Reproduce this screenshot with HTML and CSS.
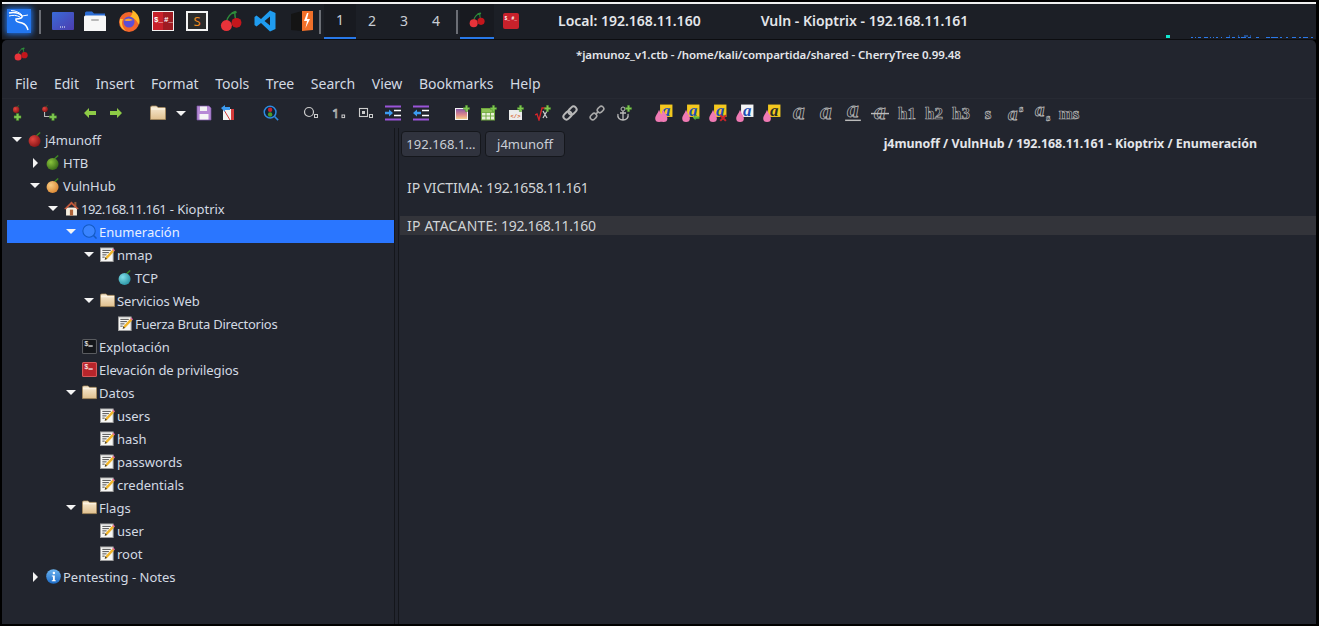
FILE: index.html
```html
<!DOCTYPE html>
<html lang="es">
<head>
<meta charset="utf-8">
<title>CherryTree</title>
<link rel="stylesheet" href="styles.css">
</head>
<body>
<svg class="defs" aria-hidden="true">
  <defs>
    <radialGradient id="gRed" cx=".35" cy=".35" r=".8"><stop offset="0" stop-color="#e2453f"/><stop offset="1" stop-color="#7d0f12"/></radialGradient>
    <radialGradient id="gGreen" cx=".35" cy=".35" r=".8"><stop offset="0" stop-color="#8ac43c"/><stop offset="1" stop-color="#2c5c12"/></radialGradient>
    <radialGradient id="gOrange" cx=".35" cy=".35" r=".8"><stop offset="0" stop-color="#f9cd85"/><stop offset="1" stop-color="#d9802a"/></radialGradient>
    <radialGradient id="gCyan" cx=".35" cy=".35" r=".8"><stop offset="0" stop-color="#7fe0e8"/><stop offset="1" stop-color="#1f8a9c"/></radialGradient>
    <linearGradient id="gFolder" x1="0" y1="0" x2="0" y2="1"><stop offset="0" stop-color="#f8ecd6"/><stop offset="1" stop-color="#e0c08e"/></linearGradient>
    <linearGradient id="gTerm" x1="0" y1="0" x2="1" y2="1"><stop offset="0" stop-color="#3a6bd8"/><stop offset="1" stop-color="#4c3cae"/></linearGradient>
    <linearGradient id="gInfo" x1="0" y1="0" x2="0" y2="1"><stop offset="0" stop-color="#6db4f0"/><stop offset="1" stop-color="#1c6cc8"/></linearGradient>
    <linearGradient id="gImg" x1="0" y1="0" x2="0" y2="1"><stop offset="0" stop-color="#8a5aa8"/><stop offset=".6" stop-color="#e08a8a"/><stop offset="1" stop-color="#f2cf8a"/></linearGradient>

    <symbol id="cherries" viewBox="0 0 24 24">
      <path d="M7 13 C8 8 11 4 16 2 C16 7 17 10 18 12" fill="none" stroke="#2e8b3a" stroke-width="1.6"/>
      <path d="M13 3.5 L18 2" stroke="#2e8b3a" stroke-width="2.4"/>
      <circle cx="7" cy="17" r="6" fill="#e8333a"/>
      <circle cx="18" cy="14" r="5.4" fill="#c4161c"/>
    </symbol>
    <symbol id="fruit-red" viewBox="0 0 16 16"><path d="M8 5 L13 0.5" stroke="#3f8a24" stroke-width="1.4"/><circle cx="7" cy="9.5" r="6.4" fill="url(#gRed)"/></symbol>
    <symbol id="fruit-green" viewBox="0 0 16 16"><path d="M8 5 L13 0.5" stroke="#3f8a24" stroke-width="1.4"/><circle cx="7" cy="9.5" r="6.4" fill="url(#gGreen)"/></symbol>
    <symbol id="fruit-orange" viewBox="0 0 16 16"><path d="M8 5 L13 0.5" stroke="#3f8a24" stroke-width="1.4"/><circle cx="7" cy="9.5" r="6.4" fill="url(#gOrange)"/></symbol>
    <symbol id="fruit-cyan" viewBox="0 0 16 16"><path d="M8 5 L13 0.5" stroke="#3f8a24" stroke-width="1.4"/><circle cx="7" cy="9.5" r="6.4" fill="url(#gCyan)"/></symbol>
    <symbol id="home" viewBox="0 0 16 16">
      <rect x="11" y="1" width="2.2" height="5" fill="#8a5a3a"/>
      <rect x="2.2" y="7" width="11.6" height="8.5" fill="#f6efe0"/>
      <path d="M0 8.6 L8 .6 L16 8.6 L14 8.9 L8 3.4 L2 8.9 Z" fill="#c2573a"/>
      <rect x="6.3" y="9.2" width="3.4" height="6.3" fill="#b0643a"/>
    </symbol>
    <symbol id="glass" viewBox="0 0 16 16">
      <circle cx="7.5" cy="7.5" r="6.6" fill="#3a84ff" stroke="#1359c0" stroke-width="1.1"/>
      <path d="M12.3 12.3 L15.5 15.5" stroke="#1359c0" stroke-width="1.6"/>
    </symbol>
    <symbol id="note" viewBox="0 0 16 16">
      <rect x="0.5" y="1" width="13.5" height="14.5" fill="#f7f7f5" stroke="#a0a0a0"/>
      <path d="M2.5 3.6H11.5M2.5 6H9.5M2.5 8.4H7M2.5 10.8H5" stroke="#333" stroke-width=".9"/>
      <path d="M5 13.5 L5.8 11 L13.2 3 L15 4.8 L7.5 12.8 Z" fill="#f0b429"/>
      <path d="M13.2 3 L14.2 1.6 L16 3.4 L15 4.8 Z" fill="#e86a9a"/>
      <path d="M5 13.5 L5.8 11 L7.5 12.8 Z" fill="#3a3a3a"/>
    </symbol>
    <symbol id="folder" viewBox="0 0 16 16">
      <path d="M.5 2.5 Q.5 1 2 1 H6.5 L8 2.5 H14.5 Q15.5 2.5 15.5 3.5 V14.5 H.5 Z" fill="url(#gFolder)" stroke="#a88a5a" stroke-width=".8"/>
      <path d="M1 4 H15" stroke="#fff8ea" stroke-width="1"/>
    </symbol>
    <symbol id="term-dark" viewBox="0 0 14 14">
      <rect x=".5" y=".5" width="13" height="13" rx="1" fill="#14161a" stroke="#5a5c60"/>
      <text x="2" y="6.6" class="svg-mono" font-size="6.4" fill="#fff">$</text>
      <rect x="6" y="6" width="4" height="1.1" fill="#fff"/>
    </symbol>
    <symbol id="term-red" viewBox="0 0 14 14">
      <rect x=".5" y=".5" width="13" height="13" rx="1" fill="#b8252b" stroke="#d85a5a"/>
      <text x="2" y="6.6" class="svg-mono" font-size="6.4" fill="#fff">$</text>
      <rect x="6" y="6" width="4" height="1.1" fill="#fff"/>
    </symbol>
    <symbol id="info" viewBox="0 0 16 16">
      <circle cx="8" cy="8" r="7.8" fill="url(#gInfo)"/>
      <circle cx="8.4" cy="4.2" r="1.3" fill="#fff"/>
      <path d="M6.2 7 H9.4 V12 H10.4 V13 H6.2 V12 H7.4 V8 H6.2 Z" fill="#fff"/>
    </symbol>
    <symbol id="plus" viewBox="0 0 10 10">
      <path d="M3.4 .5 H6.6 V3.4 H9.5 V6.6 H6.6 V9.5 H3.4 V6.6 H.5 V3.4 H3.4 Z" fill="#7ec850" stroke="#3d7a24" stroke-width=".5"/>
    </symbol>
    <symbol id="arrow-left" viewBox="0 0 12 10"><path d="M0 5 L5 0 V3 H12 V7 H5 V10 Z" fill="#8ecb46"/></symbol>
    <symbol id="arrow-right" viewBox="0 0 12 10"><path d="M12 5 L7 0 V3 H0 V7 H7 V10 Z" fill="#8ecb46"/></symbol>
    <symbol id="indent" viewBox="0 0 16 16">
      <path d="M0 1.5 H16 M0 14.5 H16" stroke="#9a55d8" stroke-width="2"/>
      <path d="M9 5.5 H16 M9 10.5 H16" stroke="#fff" stroke-width="1.6"/>
      <path d="M8 8 L4 4.6 V6.8 H0 V9.2 H4 V11.4 Z" fill="#3c9cf2"/>
    </symbol>
    <symbol id="outdent" viewBox="0 0 16 16">
      <path d="M0 1.5 H16 M0 14.5 H16" stroke="#9a55d8" stroke-width="2"/>
      <path d="M9 5.5 H16 M9 10.5 H16" stroke="#fff" stroke-width="1.6"/>
      <path d="M0 8 L4 4.6 V6.8 H8 V9.2 H4 V11.4 Z" fill="#3c9cf2"/>
    </symbol>
    <symbol id="drop-one" viewBox="0 0 16 16">
      <path d="M3.6 5 C1.8 9.5 .2 10.6 .2 12.8 A3.4 3.2 0 0 0 7 12.8 C7 10.6 5.4 9.5 3.6 5 Z" fill="#f07ab4"/>
    </symbol>
  </defs>
</svg>

<div class="screen">
  <div class="topline"></div>

  <header class="taskbar">
    <div class="slot slot-kali">
      <svg class="kali" viewBox="0 0 24 24">
        <rect width="24" height="24" fill="#2276f0"/>
        <path d="M2 4 C7 3 12 4 15 7 C16 9 12 10 9 10 C8 13 12 13 15 14 C18 15 20 17 21 21" fill="none" stroke="#fff" stroke-width="1.5"/>
        <path d="M2 7 C6 6 9 6 13 8 M4 1.5 C8 1.5 12 3 15 6 M15 7 L21 6" fill="none" stroke="#fff" stroke-width="1"/>
      </svg>
    </div>
    <span class="bar-sep"></span>
    <div class="slot slot-term">
      <svg class="launch" viewBox="0 0 22 18"><rect width="22" height="18" rx="1" fill="url(#gTerm)"/><path d="M8 15 H14" stroke="#fff" stroke-width="1.2" stroke-dasharray="1 1"/></svg>
    </div>
    <div class="slot">
      <svg class="launch" viewBox="0 0 22 20">
        <path d="M1 2 Q1 .5 2.5 .5 H8 L10 2.5 H21 V8 H1 Z" fill="#2b6cd4"/>
        <path d="M0 6 Q0 4.5 1.5 4.5 H20.5 Q22 4.5 22 6 V20 H0 Z" fill="#f7f7f7"/>
        <rect x="7" y="8" width="8" height="2" rx="1" fill="#b8b8b8"/>
      </svg>
    </div>
    <div class="slot">
      <svg class="launch" viewBox="0 0 22 22">
        <circle cx="11" cy="12" r="10" fill="#f2652b"/>
        <path d="M14 0 C20 3 23 9 21 15 C19 11 17 8 12 7 C14 5 15 3 14 0 Z" fill="#ffb627"/>
        <path d="M2 9 C1 14 3 19 8 21 C4 17 3 13 5 9 Z" fill="#ffc13a"/>
        <circle cx="11" cy="12" r="5.5" fill="#5b4fd6"/>
        <path d="M6 10 C9 8 12 8 15 10 C13 11 10 11 8 11 Z" fill="#f8a13a"/>
      </svg>
    </div>
    <div class="slot">
      <svg class="launch" viewBox="0 0 22 20">
        <rect width="22" height="20" fill="#f2f2f2"/><rect x="1" y="1" width="10" height="18" fill="#c8212b"/><rect x="11" y="1" width="10" height="18" fill="#9e1b22"/>
        <text x="2" y="11" class="svg-mono-b" font-size="7.5" fill="#fff">$_</text>
        <text x="12" y="11" class="svg-mono-b" font-size="7.5" fill="#fff">#_</text>
      </svg>
    </div>
    <div class="slot">
      <svg class="launch" viewBox="0 0 22 20">
        <rect x="1" y="1" width="20" height="18" fill="#2b2b2b" stroke="#f4f4f4" stroke-width="2"/>
        <text x="11" y="15" text-anchor="middle" class="svg-sans" font-size="13" fill="#f08a1d">S</text>
      </svg>
    </div>
    <div class="slot">
      <svg class="launch" viewBox="0 0 24 24"><use href="#cherries"/></svg>
    </div>
    <div class="slot slot-narrow">
      <svg class="launch" viewBox="0 0 22 22">
        <path d="M16 0.5 L21.5 3 V19 L16 21.5 L7 13 L2.5 16.5 L.5 15 V7 L2.5 5.5 L7 9 Z M16 6.5 L10.5 11 L16 15.5 Z" fill="#1f9cf0" fill-rule="evenodd"/>
      </svg>
    </div>
    <div class="slot slot-burp">
      <svg class="launch" viewBox="0 0 22 20">
        <path d="M0 3 L11 0 V20 L0 19 Z" fill="#141414"/>
        <path d="M11 0 H22 V19 L11 20 Z" fill="#f0702a"/>
        <path d="M16 2 L13 10 H16 L14.5 17 L19 8 H16 L17.5 2 Z" fill="#fff"/>
      </svg>
    </div>
    <span class="bar-sep"></span>
    <nav class="workspaces">
      <span class="ws ws-active">1</span>
      <span class="ws">2</span>
      <span class="ws">3</span>
      <span class="ws">4</span>
    </nav>
    <span class="bar-sep bar-sep-second"></span>
    <div class="slot slot-active">
      <svg class="launch-small" viewBox="0 0 24 24"><use href="#cherries"/></svg>
    </div>
    <div class="slot">
      <svg class="launch-small" viewBox="0 0 16 16">
        <rect width="16" height="16" rx="2" fill="#c8212b"/>
        <text x="1.5" y="7" class="svg-mono-b" font-size="4.6" fill="#fff">$_</text>
        <text x="8.5" y="7" class="svg-mono-b" font-size="4.6" fill="#fff">#_</text>
      </svg>
    </div>
    <span class="status status-local">Local: 192.168.11.160</span>
    <span class="status status-vuln">Vuln - Kioptrix - 192.168.11.161</span>
    <svg class="meter" viewBox="0 0 150 4">
      <rect x="0" y="0" width="4" height="3" fill="#10e8d0"/>
      <path d="M25 2.5H27M29 2.5H30M32 2.5H35M38 2.5H42M44 2.5H45M47 2.5H48M50 2.5H52M55 2.5H56M60 2.5H64M66 2.5H69M72 2.5H74M75 2.5H80M82 2.5H85M90 2.5H93M100 2.5H104M105 2.5H112M114 2.5H116M120 2.5H122M126 2.5H130M133 2.5H135M137 2.5H142M145 2.5H147" stroke="#2a78e8" stroke-width="1"/>
      <path d="M78 1H82M63 1H64M72 1H73M84 1H85" stroke="#2a78e8" stroke-width="1"/>
    </svg>
  </header>

  <main class="window">
    <div class="titlebar">
      <svg class="title-icon" viewBox="0 0 24 24"><use href="#cherries"/></svg>
      <span class="title-text">*jamunoz_v1.ctb - /home/kali/compartida/shared - CherryTree 0.99.48</span>
    </div>

    <nav class="menubar">
      <span class="menu-item">File</span>
      <span class="menu-item">Edit</span>
      <span class="menu-item">Insert</span>
      <span class="menu-item">Format</span>
      <span class="menu-item">Tools</span>
      <span class="menu-item">Tree</span>
      <span class="menu-item">Search</span>
      <span class="menu-item">View</span>
      <span class="menu-item">Bookmarks</span>
      <span class="menu-item">Help</span>
    </nav>

    <div class="toolbar">
      <div class="tgroup tgroup-a">
        <span class="tool"><svg class="ti" viewBox="0 0 18 18"><use href="#fruit-red" x="3" y="0" width="9" height="9"/><use href="#plus" x="4" y="9" width="9" height="9"/></svg></span>
        <span class="tool"><svg class="ti" viewBox="0 0 18 18"><use href="#fruit-red" x="1" y="0" width="8" height="8"/><path d="M4 8 V13 H10" fill="none" stroke="#bbb" stroke-width="1.2"/><use href="#plus" x="9" y="9" width="9" height="9"/></svg></span>
      </div>
      <div class="tgroup tgroup-b">
        <span class="tool"><svg class="ti ti-arrow" viewBox="0 0 12 10"><use href="#arrow-left"/></svg></span>
        <span class="tool"><svg class="ti ti-arrow" viewBox="0 0 12 10"><use href="#arrow-right"/></svg></span>
      </div>
      <div class="tgroup tgroup-c">
        <span class="tool"><svg class="ti" viewBox="0 0 16 16"><use href="#folder"/></svg></span>
        <span class="tool"><span class="drop"></span></span>
        <span class="tool"><svg class="ti" viewBox="0 0 16 16"><path d="M1 1 H13 L15 3 V15 H1 Z" fill="#b78ad6" stroke="#7d56a8" stroke-width=".7"/><rect x="4" y="1.5" width="7" height="4.5" fill="#f2f2f2"/><rect x="3.5" y="9" width="9" height="5.5" fill="#f6f6f6"/></svg></span>
        <span class="tool"><svg class="ti" viewBox="0 0 16 16"><path d="M3 4 H14 V15 H3 Z" fill="#f4f4f4"/><rect x="11" y="4" width="3" height="11" fill="#d43a3a"/><path d="M4 5 L10 15" stroke="#d43a3a"/><path d="M1 3 L5 0 V2 H10 V5 H5 V7 Z" fill="#3c9cf2"/></svg></span>
      </div>
      <div class="tgroup tgroup-d">
        <span class="tool"><svg class="ti" viewBox="0 0 18 18"><circle cx="8" cy="8" r="6.6" fill="#123" stroke="#2f8ae0" stroke-width="1.7"/><path d="M13 13 L17 17" stroke="#2f8ae0" stroke-width="1.8"/><circle cx="8" cy="5.4" r="2.5" fill="#c8212b"/><circle cx="8" cy="10.6" r="2.5" fill="#4c9a2a"/></svg></span>
      </div>
      <div class="tgroup tgroup-e">
        <span class="tool tool-wide"><svg class="ti" viewBox="0 0 16 16"><circle cx="6" cy="7" r="4.5" fill="none" stroke="#ccc" stroke-width="1.2"/><rect x="11.5" y="9.5" width="3" height="3" fill="none" stroke="#ccc"/></svg></span>
        <span class="tool"><svg class="ti" viewBox="0 0 16 16"><text x="1" y="13" class="svg-sans" font-size="13" fill="none" stroke="#ccc" stroke-width=".7">1</text><rect x="11" y="10" width="2.6" height="2.6" fill="none" stroke="#ccc"/></svg></span>
        <span class="tool"><svg class="ti" viewBox="0 0 16 16"><rect x="1.5" y="3.5" width="8" height="8" fill="none" stroke="#ccc" stroke-width="1.1"/><rect x="4" y="6" width="3" height="3" fill="#ccc"/><rect x="11.5" y="9.5" width="3" height="3" fill="none" stroke="#ccc"/></svg></span>
        <span class="tool"><svg class="ti" viewBox="0 0 16 16"><use href="#indent"/></svg></span>
        <span class="tool tool-wide"><svg class="ti" viewBox="0 0 16 16"><use href="#outdent"/></svg></span>
      </div>
      <div class="tgroup tgroup-f">
        <span class="tool"><svg class="ti" viewBox="0 0 16 16"><rect x="1" y="3" width="13" height="12" fill="#f4f4f4"/><rect x="2" y="4" width="11" height="10" fill="url(#gImg)"/><use href="#plus" x="9" y="0" width="7" height="7"/></svg></span>
        <span class="tool"><svg class="ti" viewBox="0 0 16 16"><rect x=".5" y="3.5" width="13" height="11.5" fill="#e8f0d8" stroke="#6ea83c"/><path d="M.5 7.5H13.5M.5 11H13.5M5 4V15M9.5 4V15" stroke="#6ea83c" stroke-width=".9"/><rect x="1" y="4" width="12" height="3" fill="#8fc356"/><use href="#plus" x="9" y="0" width="7" height="7"/></svg></span>
        <span class="tool"><svg class="ti" viewBox="0 0 16 16"><rect x="1" y="5" width="13" height="10" fill="#ececec"/><text x="7.5" y="13" text-anchor="middle" class="svg-mono-b" font-size="5.5" fill="#d8622a">&lt;/&gt;</text><use href="#plus" x="9" y="0" width="7" height="7"/></svg></span>
        <span class="tool"><svg class="ti" viewBox="0 0 16 16"><path d="M0 10 L2 9 L4 15 L7 3 H14" fill="none" stroke="#d8242a" stroke-width="1.3"/><path d="M8 6 L12 13 M12 6 L8 13" stroke="#ccc" stroke-width="1.3"/><use href="#plus" x="9" y="0" width="7" height="7"/></svg></span>
        <span class="tool"><svg class="ti" viewBox="0 0 16 16"><g fill="none" stroke="#b8b8b8" stroke-width="2" transform="rotate(-45 8 8)"><rect x="0" y="5" width="9" height="6" rx="3"/><rect x="7" y="5" width="9" height="6" rx="3"/></g></svg></span>
        <span class="tool"><svg class="ti" viewBox="0 0 16 16"><g fill="none" stroke="#a8a8a8" stroke-width="1.6" transform="rotate(-45 8 8)"><rect x="-.5" y="5.5" width="7" height="5" rx="2.5"/><rect x="9.5" y="5.5" width="7" height="5" rx="2.5"/><path d="M6 8 H10"/></g></svg></span>
        <span class="tool"><svg class="ti" viewBox="0 0 16 16"><circle cx="7" cy="4" r="2" fill="none" stroke="#bbb"/><path d="M7 6 V15 M2 9 C1 13 4 15 7 15 C10 15 13 13 12 9 M4 8 H10" fill="none" stroke="#bbb" stroke-width="1.3"/><use href="#plus" x="9" y="0" width="7" height="7"/></svg></span>
      </div>
      <div class="tgroup tgroup-g">
        <span class="tool"><svg class="ti ti-fmt" viewBox="0 0 16 16"><rect x="4.5" y=".5" width="11" height="11" fill="#f4c81f"/><text x="10" y="10.5" text-anchor="middle" class="svg-fmt" font-size="15" fill="#1f4fb4">a</text><use href="#drop-one"/><use href="#drop-one" x="4"/></svg></span>
        <span class="tool"><svg class="ti ti-fmt" viewBox="0 0 16 16"><rect x="4.5" y=".5" width="11" height="11" fill="#f4c81f"/><text x="10" y="10.5" text-anchor="middle" class="svg-fmt" font-size="15" fill="#1f4fb4">a</text><use href="#drop-one"/><path d="M9.5 12 L12 9.5 V11 H15.5 V13 H12 V14.5 Z" fill="#5cb83c"/></svg></span>
        <span class="tool"><svg class="ti ti-fmt" viewBox="0 0 16 16"><rect x="4.5" y=".5" width="11" height="11" fill="#f4c81f"/><text x="10" y="10.5" text-anchor="middle" class="svg-fmt" font-size="15" fill="#1f4fb4">a</text><use href="#drop-one"/><path d="M10 10 L15 15 M15 10 L10 15" stroke="#c8242a" stroke-width="1.8"/></svg></span>
        <span class="tool"><svg class="ti ti-fmt" viewBox="0 0 16 16"><rect x="4.5" y=".5" width="11" height="11" fill="#f4f4f4"/><text x="10" y="10.5" text-anchor="middle" class="svg-fmt" font-size="15" fill="#1f4fb4">a</text><use href="#drop-one"/></svg></span>
        <span class="tool"><svg class="ti ti-fmt" viewBox="0 0 16 16"><rect x="4.5" y=".5" width="11" height="11" fill="#f4c81f"/><text x="10" y="10.5" text-anchor="middle" class="svg-fmt" font-size="15" fill="#2a2a2a">a</text><use href="#drop-one"/></svg></span>
        <span class="tool"><svg class="ti ti-fmt" viewBox="0 0 16 16"><text x="8" y="13" text-anchor="middle" class="svg-out">a</text></svg></span>
        <span class="tool"><svg class="ti ti-fmt" viewBox="0 0 16 16"><text x="8" y="13" text-anchor="middle" class="svg-out">a</text></svg></span>
        <span class="tool"><svg class="ti ti-fmt" viewBox="0 0 16 16"><text x="8" y="11.5" text-anchor="middle" class="svg-out">a</text><path d="M1 14.5 H15" stroke="#bbb" stroke-width="1.3"/></svg></span>
        <span class="tool"><svg class="ti ti-fmt" viewBox="0 0 16 16"><text x="8" y="13" text-anchor="middle" class="svg-out">a</text><path d="M0 8.5 H16" stroke="#bbb" stroke-width="1.3"/></svg></span>
        <span class="tool"><svg class="ti ti-fmt" viewBox="0 0 16 16"><text x="8" y="13.5" text-anchor="middle" class="svg-head">h1</text></svg></span>
        <span class="tool"><svg class="ti ti-fmt" viewBox="0 0 16 16"><text x="8" y="13.5" text-anchor="middle" class="svg-head">h2</text></svg></span>
        <span class="tool"><svg class="ti ti-fmt" viewBox="0 0 16 16"><text x="8" y="13.5" text-anchor="middle" class="svg-head">h3</text></svg></span>
        <span class="tool"><svg class="ti ti-fmt" viewBox="0 0 16 16"><text x="8" y="13" text-anchor="middle" class="svg-head svg-small">s</text></svg></span>
        <span class="tool"><svg class="ti ti-fmt" viewBox="0 0 16 16"><text x="6" y="14" text-anchor="middle" class="svg-out svg-out-sm">a</text><text x="13.5" y="7" text-anchor="middle" class="svg-sub">s</text></svg></span>
        <span class="tool"><svg class="ti ti-fmt" viewBox="0 0 16 16"><text x="6" y="11" text-anchor="middle" class="svg-out svg-out-sm">a</text><text x="13.5" y="15" text-anchor="middle" class="svg-sub">s</text></svg></span>
        <span class="tool"><svg class="ti ti-fmt" viewBox="0 0 16 16"><text x="8" y="13" text-anchor="middle" class="svg-head svg-ms">ms</text></svg></span>
      </div>
    </div>

    <div class="panes">
      <aside class="tree">
        <div class="row l0"><span class="tw open"></span><svg class="ni" viewBox="0 0 16 16"><use href="#fruit-red"/></svg><span>j4munoff</span></div>
        <div class="row l1"><span class="tw closed"></span><svg class="ni" viewBox="0 0 16 16"><use href="#fruit-green"/></svg><span>HTB</span></div>
        <div class="row l1"><span class="tw open"></span><svg class="ni" viewBox="0 0 16 16"><use href="#fruit-orange"/></svg><span>VulnHub</span></div>
        <div class="row l2"><span class="tw open"></span><svg class="ni" viewBox="0 0 16 16"><use href="#home"/></svg><span><span class="num-tree">192.168.11.161</span> - Kioptrix</span></div>
        <div class="row l3 selected"><span class="tw open"></span><svg class="ni" viewBox="0 0 16 16"><use href="#glass"/></svg><span>Enumeración</span></div>
        <div class="row l4"><span class="tw open"></span><svg class="ni" viewBox="0 0 16 16"><use href="#note"/></svg><span>nmap</span></div>
        <div class="row l5"><span class="tw"></span><svg class="ni" viewBox="0 0 16 16"><use href="#fruit-cyan"/></svg><span>TCP</span></div>
        <div class="row l4"><span class="tw open"></span><svg class="ni" viewBox="0 0 16 16"><use href="#folder"/></svg><span class="tight">Servicios Web</span></div>
        <div class="row l5"><span class="tw"></span><svg class="ni" viewBox="0 0 16 16"><use href="#note"/></svg><span class="tighter">Fuerza Bruta Directorios</span></div>
        <div class="row l3"><span class="tw"></span><svg class="ni" viewBox="0 0 14 14"><use href="#term-dark"/></svg><span>Explotación</span></div>
        <div class="row l3"><span class="tw"></span><svg class="ni" viewBox="0 0 14 14"><use href="#term-red"/></svg><span class="tight">Elevación de privilegios</span></div>
        <div class="row l3"><span class="tw open"></span><svg class="ni" viewBox="0 0 16 16"><use href="#folder"/></svg><span>Datos</span></div>
        <div class="row l4"><span class="tw"></span><svg class="ni" viewBox="0 0 16 16"><use href="#note"/></svg><span>users</span></div>
        <div class="row l4"><span class="tw"></span><svg class="ni" viewBox="0 0 16 16"><use href="#note"/></svg><span>hash</span></div>
        <div class="row l4"><span class="tw"></span><svg class="ni" viewBox="0 0 16 16"><use href="#note"/></svg><span>passwords</span></div>
        <div class="row l4"><span class="tw"></span><svg class="ni" viewBox="0 0 16 16"><use href="#note"/></svg><span>credentials</span></div>
        <div class="row l3"><span class="tw open"></span><svg class="ni" viewBox="0 0 16 16"><use href="#folder"/></svg><span>Flags</span></div>
        <div class="row l4"><span class="tw"></span><svg class="ni" viewBox="0 0 16 16"><use href="#note"/></svg><span>user</span></div>
        <div class="row l4"><span class="tw"></span><svg class="ni" viewBox="0 0 16 16"><use href="#note"/></svg><span>root</span></div>
        <div class="row l1"><span class="tw closed"></span><svg class="ni" viewBox="0 0 16 16"><use href="#info"/></svg><span>Pentesting - Notes</span></div>
      </aside>

      <section class="editor">
        <div class="editor-head">
          <span class="tab">192.168.1…</span>
          <span class="tab">j4munoff</span>
          <span class="crumbs">j4munoff / VulnHub / 192.168.11.161 - Kioptrix / Enumeración</span>
        </div>
        <div class="text-view">
          <div class="line"></div>
          <div class="line"><span class="label-narrow">IP VICTIMA:</span> <span class="num">192.1658.11.161</span></div>
          <div class="line"></div>
          <div class="line line-current"><span class="label">IP ATACANTE:</span> <span class="num">192.168.11.160</span></div>
        </div>
      </section>
    </div>
  </main>
</div>
</body>
</html>
```

FILE: styles.css
```css
* { box-sizing: border-box; }

html, body {
  margin: 0;
  height: 100%;
  overflow: hidden;
  background: #000;
}

body {
  font-family: "Noto Sans", sans-serif;
  color: #d3dae3;
}

.defs {
  position: absolute;
  width: 0;
  height: 0;
}

.svg-mono { font-family: "Liberation Mono", monospace; }
.svg-mono-b { font-family: "Liberation Mono", monospace; font-weight: 700; }
.svg-sans { font-family: "Noto Sans", sans-serif; }
.svg-fmt { font-family: "Liberation Serif", serif; font-weight: 700; font-style: italic; }
.svg-out {
  font-family: "Liberation Serif", serif;
  font-weight: 700;
  font-style: italic;
  font-size: 21px;
  fill: #23262f;
  stroke: #b8b8b8;
  stroke-width: .7;
}
.svg-out-sm { font-size: 17px; }
.svg-head {
  font-family: "Liberation Serif", serif;
  font-weight: 700;
  font-size: 15px;
  fill: #23262f;
  stroke: #b8b8b8;
  stroke-width: .6;
}
.svg-small { font-size: 15px; }
.svg-ms { font-size: 15px; }
.svg-sub {
  font-family: "Liberation Serif", serif;
  font-weight: 700;
  font-size: 10px;
  fill: #23262f;
  stroke: #b8b8b8;
  stroke-width: .5;
}

.screen {
  width: 1319px;
  height: 626px;
  padding: 2px 3px 2px 2px;
  display: flex;
  flex-direction: column;
}

.topline {
  height: 2px;
  background: #f0f0f0;
  flex: none;
}

/* Taskbar */
.taskbar {
  height: 36px;
  flex: none;
  display: flex;
  align-items: stretch;
  background: #1c1f26;
  border-bottom: 1px solid #0c0d10;
}

.slot {
  width: 34px;
  flex: none;
  display: flex;
  align-items: center;
  justify-content: center;
  padding-bottom: 1px;
}

.slot-kali { margin-right: 3px; }
.slot-term { width: 31px; margin-left: 6px; }
.slot-narrow { width: 33px; }
.slot-burp { margin-left: 4px; }

.slot-active {
  background: #181a20;
  border-bottom: 2px solid #2878e8;
  margin-left: 2px;
}

.kali {
  width: 24px;
  height: 24px;
  box-shadow: 0 0 6px 1px #2276f0;
}

.launch { width: 22px; height: 22px; }
.launch-small { width: 16px; height: 16px; }

.bar-sep {
  width: 2px;
  height: 24px;
  align-self: center;
  flex: none;
  background: #6b6e75;
}
.bar-sep-second { margin-left: 4px; }

.workspaces {
  display: flex;
  margin-left: 3px;
}

.ws {
  width: 32px;
  display: flex;
  align-items: center;
  justify-content: center;
  font-size: 14px;
  color: #c9ced6;
  padding-bottom: 2px;
}

.ws-active {
  background: #181a20;
  border-bottom: 2px solid #2878e8;
}

.status {
  align-self: center;
  font-size: 14px;
  font-weight: 600;
  color: #e4e6ea;
  white-space: nowrap;
  padding-bottom: 2px;
}
.status-local { margin-left: 30px; }
.status-vuln { margin-left: 60px; }

.meter {
  width: 150px;
  height: 4px;
  align-self: flex-end;
  margin-left: auto;
}

/* Window */
.window {
  flex: 1;
  min-height: 0;
  display: flex;
  flex-direction: column;
  background: #22252e;
  border-radius: 5px 5px 0 0;
}

.titlebar {
  height: 28px;
  flex: none;
  display: flex;
  align-items: center;
  padding-left: 12px;
}

.title-icon {
  width: 14px;
  height: 14px;
  flex: none;
}

.title-text {
  margin-left: 548px;
  font-size: 11.5px;
  letter-spacing: -0.08px;
  font-weight: 600;
  color: #e4e6ea;
  white-space: nowrap;
}

.menubar {
  height: 30px;
  flex: none;
  display: flex;
  align-items: center;
  padding-left: 4.7px;
}

.menu-item {
  padding: 0 8.3px;
  font-size: 14px;
  color: #d3dae3;
}

.toolbar {
  height: 30px;
  flex: none;
  display: flex;
  align-items: center;
  padding: 0 0 1px .5px;
  border-top: 1px solid #272a33;
}

.tgroup {
  display: flex;
  align-items: center;
}
.tgroup .tool { width: 27px; }
.tgroup-a .tool { width: 31px; }
.tgroup-b { margin-left: 12.5px; }
.tgroup-b .tool { width: 26px; }
.tgroup-c { margin-left: 17px; }
.tgroup-c .tool { width: 23.3px; }
.tgroup-d { margin-left: 18.3px; }
.tgroup-e { margin-left: 12px; }
.tgroup-e .tool-wide { width: 29px; }
.tgroup-f { margin-left: 13px; }
.tgroup-g { margin-left: 13px; }

.tool {
  height: 20px;
  flex: none;
  display: flex;
  align-items: center;
  justify-content: center;
}

.ti { width: 16px; height: 16px; }
.ti-fmt { width: 18px; height: 18px; overflow: visible; }
.ti-arrow { width: 12px; height: 10px; }

.drop {
  width: 0;
  height: 0;
  border-left: 5px solid transparent;
  border-right: 5px solid transparent;
  border-top: 5px solid #f2f2f2;
}

/* Panes */
.panes {
  flex: 1;
  min-height: 0;
  display: flex;
}

.tree {
  width: 393px;
  flex: none;
  padding: 0 0 0 5px;
  border-right: 1px solid #14161b;
}

.row {
  height: 23px;
  display: flex;
  align-items: center;
  font-size: 13px;
  color: #d3dae3;
  white-space: nowrap;
}

.num-tree { letter-spacing: -0.5px; }
.tight { letter-spacing: -0.1px; }
.tighter { letter-spacing: -0.25px; }

.l0 { padding-left: 4px; }
.l1 { padding-left: 22px; }
.l2 { padding-left: 40px; }
.l3 { padding-left: 58px; }
.l4 { padding-left: 76px; }
.l5 { padding-left: 94px; }

.selected {
  background: #2a76ff;
  color: #e8f0ff;
}

.tw {
  width: 16px;
  flex: none;
  display: flex;
  align-items: center;
}

.tw.open::before {
  content: "";
  margin-left: 1px;
  border-left: 5px solid transparent;
  border-right: 5px solid transparent;
  border-top: 5px solid #f4f4f4;
}

.tw.closed::before {
  content: "";
  margin-left: 4px;
  border-top: 5px solid transparent;
  border-bottom: 5px solid transparent;
  border-left: 5px solid #f4f4f4;
}

.ni {
  width: 15px;
  height: 15px;
  flex: none;
  margin: 0 2px 0 1px;
}

.editor {
  flex: 1;
  min-width: 0;
  margin-left: 3px;
  border-left: 1px solid #14161b;
  display: flex;
  flex-direction: column;
}

.editor-head {
  height: 31px;
  flex: none;
  display: flex;
  align-items: center;
  gap: 4px;
  padding-left: 2px;
}

.tab {
  width: 80px;
  height: 26px;
  display: flex;
  align-items: center;
  justify-content: center;
  background: #30333e;
  border: 1px solid #15171c;
  border-radius: 4px;
  font-size: 13px;
  color: #c9ced6;
}

.crumbs {
  margin-left: auto;
  margin-right: 59px;
  font-size: 12.4px;
  font-weight: 700;
  color: #e4e6ea;
  white-space: nowrap;
}

.text-view {
  flex: 1;
}

.line {
  height: 19px;
  padding-left: 8px;
  font-size: 14px;
  line-height: 19px;
  color: #d0d3d6;
}

.label { letter-spacing: 0.2px; }
.label-narrow { letter-spacing: -0.1px; }
.num { letter-spacing: -0.35px; }

.line-current {
  margin-left: 1px;
  padding-left: 7px;
  background: #33343a;
}
```
